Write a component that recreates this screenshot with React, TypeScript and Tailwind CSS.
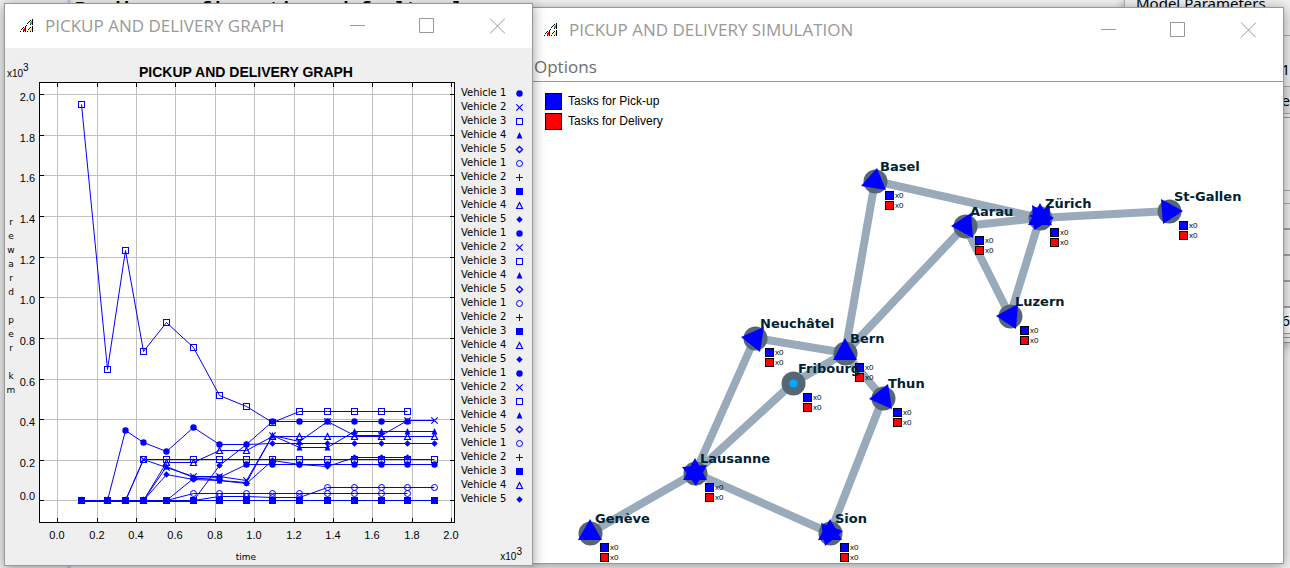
import type { ReactNode } from "react";

type Point = [number, number];
type Marker =
  | "disc"
  | "cross"
  | "square"
  | "triangleFilled"
  | "diamond"
  | "circle"
  | "plus"
  | "squareFilled"
  | "triangle"
  | "diamondFilled";

const BLUE = "#0000ff";

const MARKER_ORDER: Marker[] = [
  "disc",
  "cross",
  "square",
  "triangleFilled",
  "diamond",
  "circle",
  "plus",
  "squareFilled",
  "triangle",
  "diamondFilled",
];

function MarkerShape({ kind, x, y }: { kind: Marker; x: number; y: number }) {
  const line = { fill: "none", stroke: BLUE, strokeWidth: 1 };
  switch (kind) {
    case "disc":
      return <circle cx={x} cy={y} r={3.2} fill={BLUE} />;
    case "circle":
      return <circle cx={x} cy={y} r={3} {...line} />;
    case "cross":
      return <path d={`M${x - 3.2} ${y - 3.2}l6.4 6.4m0 -6.4l-6.4 6.4`} {...line} strokeWidth={1.2} />;
    case "plus":
      return <path d={`M${x - 3.5} ${y}h7m-3.5 -3.5v7`} {...line} />;
    case "square":
      return <rect x={x - 3} y={y - 3} width={6} height={6} {...line} />;
    case "squareFilled":
      return <rect x={x - 3.5} y={y - 3.5} width={7} height={7} fill={BLUE} />;
    case "triangle":
      return <path d={`M${x} ${y - 3}l3 6h-6z`} {...line} strokeWidth={1.2} />;
    case "triangleFilled":
      return <path d={`M${x} ${y - 3.5}l3 6.5h-6z`} fill={BLUE} />;
    case "diamond":
      return <path d={`M${x} ${y - 3}l3 3l-3 3l-3 -3z`} {...line} strokeWidth={1.4} />;
    case "diamondFilled":
      return <path d={`M${x} ${y - 3.2}l3.2 3.2l-3.2 3.2l-3.2 -3.2z`} fill={BLUE} />;
  }
}

/* ---------- chart data, in canvas units ---------- */

const TIMES = [81, 107, 125, 143, 166, 193, 219, 246, 272, 299, 327, 354, 381, 407, 434];
const Z = 500;

const SERIES: { marker: Marker; values: number[] }[] = [
  { marker: "square", values: [104, 369, 250, 351, 322, 347, 395, 406, 422, 411, 411, 411, 411, 411] },
  { marker: "disc", values: [Z, Z, 430, 442, 451, 427, 444, 444, 421, 421, 421, 421, 421, 421] },
  { marker: "cross", values: [Z, Z, Z, 459, 467, 476, 476, 480, 435, 441, 421, 435, 435, 420, 420] },
  { marker: "square", values: [Z, Z, Z, 459, 459, 459, 459, 459, 459, 459, 459, 459, 459, 459, 459] },
  { marker: "triangle", values: [Z, Z, Z, Z, 462, 462, 450, 450, 436, 436, 436, 436, 436, 436, 436] },
  { marker: "triangleFilled", values: [Z, Z, Z, Z, 466, 477, 480, 482, 435, 447, 447, 431, 431, 431, 431] },
  { marker: "diamondFilled", values: [Z, Z, Z, Z, 474, 479, 480, 483, 460, 464, 466, 457, 457, 457] },
  { marker: "diamondFilled", values: [Z, Z, Z, Z, Z, Z, 465, 444, 443, 443, 443, 443, 443, 443, 443] },
  { marker: "disc", values: [Z, Z, Z, Z, Z, 478, 477, 464, 464, 464, 464, 464, 464, 464, 464] },
  { marker: "circle", values: [Z, Z, Z, Z, Z, 493, 493, 493, 493, 493, 493, 493, 493, 493] },
  { marker: "circle", values: [Z, Z, Z, Z, Z, Z, 496, 496, 497, 497, 487, 487, 487, 487, 487] },
  { marker: "squareFilled", values: [Z, Z, Z, Z, Z, Z, Z, Z, Z, Z, Z, Z, Z, Z, Z] },
];

const X_TICKS = [57, 97, 136, 175, 215, 254, 294, 333, 372, 412, 451];
const Y_TICKS = [500, 460, 419, 379, 338, 297, 257, 216, 175, 135, 94];
const tickLabel = (i: number) => (i * 0.2).toFixed(1);

function RewardChart() {
  return (
    <svg
      viewBox="5 48 455 517"
      className="w-[455px] shrink-0"
      role="img"
      aria-label="Reward per km over time"
    >
      <g fontFamily="'Liberation Sans', Arial, sans-serif" fontSize={11} fill="#000">
        <text x={246} y={77} fontSize={14} fontWeight={700} textAnchor="middle">
          PICKUP AND DELIVERY GRAPH
        </text>
        <text x={7} y={77} fontSize={10}>x10</text>
        <text x={23} y={71} fontSize={10}>3</text>
        {Y_TICKS.map((y, i) => (
          <text key={y} x={35} y={i === 0 ? y : y + 7} textAnchor="end">
            {tickLabel(i)}
          </text>
        ))}
        {X_TICKS.map((x, i) => (
          <text key={x} x={x} y={539} textAnchor="middle">
            {tickLabel(i)}
          </text>
        ))}
      </g>
      <g fontFamily="'DejaVu Sans', sans-serif" fontSize={9} fill="#000" textAnchor="middle">
        <text x={246} y={560}>time</text>
        {"reward per km".split("").map((c, i) => (
          <text key={i} x={11} y={225 + i * 14}>
            {c}
          </text>
        ))}
      </g>

      <g shapeRendering="crispEdges" fill="none">
        <rect x={39.5} y={82.5} width={415} height={440} fill="#fff" stroke="none" />
        {X_TICKS.map((x) => (
          <path key={x} d={`M${x + 0.5} 83V522`} stroke="#c0c0c0" />
        ))}
        {Y_TICKS.map((y) => (
          <path key={y} d={`M40 ${y + 0.5}H454`} stroke="#c0c0c0" />
        ))}
        {X_TICKS.map((x) => (
          <path key={x} d={`M${x + 0.5} 83v4M${x + 0.5} 518v4`} stroke="#000" />
        ))}
        {Y_TICKS.map((y) => (
          <path key={y} d={`M40 ${y + 0.5}h4M450 ${y + 0.5}h4`} stroke="#000" />
        ))}
        <rect x={39.5} y={82.5} width={415} height={440} stroke="#000" />
      </g>

      <g transform="translate(0.5 0.5)">
        {SERIES.map((s, n) => (
          <g key={n}>
            <polyline
              points={s.values.map((v, i) => `${TIMES[i]},${v}`).join(" ")}
              fill="none"
              stroke={BLUE}
              strokeWidth={1}
            />
            {s.values.map((v, i) => (
              <MarkerShape key={i} kind={s.marker} x={TIMES[i]} y={v} />
            ))}
          </g>
        ))}
        <path d="M81 500.5H194" stroke={BLUE} strokeWidth={2} />
      </g>
    </svg>
  );
}

function VehicleLegend() {
  return (
    <div className="flex flex-1 flex-col justify-between pt-[38px] pr-2 pl-px">
      <ul className="font-['DejaVu_Sans',sans-serif] text-[10px] leading-[14px] text-black">
        {Array.from({ length: 30 }, (_, i) => (
          <li key={i} className="flex items-center justify-between">
            <span>Vehicle {(i % 5) + 1}</span>
            <svg viewBox="0 0 9 9" className="size-[9px]" aria-hidden="true">
              <MarkerShape kind={MARKER_ORDER[i % 10]} x={4.5} y={4.5} />
            </svg>
          </li>
        ))}
      </ul>
      <div className="mr-0.5 self-end font-['Liberation_Sans',Arial,sans-serif] text-[10px] leading-4 text-black">
        x10<sup className="text-[10px]">3</sup>
      </div>
    </div>
  );
}

/* ---------- map ---------- */

const CITIES: Record<string, Point> = {
  Basel: [875, 181],
  Aarau: [965, 226],
  "Zürich": [1040, 218],
  "St-Gallen": [1169, 211],
  Luzern: [1010, 316],
  "Neuchâtel": [755, 338],
  Bern: [845, 353],
  Fribourg: [793, 383],
  Thun: [883, 398],
  Lausanne: [695, 473],
  "Genève": [590, 533],
  Sion: [830, 533],
};

const ROADS: [string, string][] = [
  ["Basel", "Bern"],
  ["Basel", "Zürich"],
  ["Aarau", "Zürich"],
  ["Aarau", "Bern"],
  ["Aarau", "Luzern"],
  ["Zürich", "Luzern"],
  ["Zürich", "St-Gallen"],
  ["Neuchâtel", "Bern"],
  ["Neuchâtel", "Lausanne"],
  ["Bern", "Fribourg"],
  ["Fribourg", "Lausanne"],
  ["Bern", "Thun"],
  ["Thun", "Sion"],
  ["Lausanne", "Sion"],
  ["Lausanne", "Genève"],
];

const VEHICLES = [
  "877,168 861,186 886,190",
  "845,338 833,360 857,360",
  "590,519 578,540 602,540",
  "951,226 971,213 973,238",
  "996,316 1018,304 1016,329",
  "741,337 764,327 760,352",
  "869,399 888,384 892,409",
  "1161,199 1183,211 1163,224",
  "1040,203 1028,225 1052,225",
  "1032,205 1054,218 1034,230",
  "1050,206 1049,226 1029,216",
  "695,458 683,480 707,480",
  "682,467 707,465 696,486",
  "830,519 818,540 842,540",
  "843,531 825,546 821,523",
];

function RoadMap() {
  return (
    <svg viewBox="529 82 754 481" className="w-[754px]" role="img" aria-label="Road network">
      <g stroke="#99aabb" strokeWidth={8}>
        {ROADS.map(([a, b]) => (
          <line key={a + b} x1={CITIES[a][0]} y1={CITIES[a][1]} x2={CITIES[b][0]} y2={CITIES[b][1]} />
        ))}
      </g>
      {Object.entries(CITIES).map(([name, [x, y]]) => (
        <circle key={name} cx={x + 0.5} cy={y + 0.5} r={12} fill="#556677" />
      ))}
      <circle cx={793.5} cy={383.5} r={4} fill="#00aaff" />
      {VEHICLES.map((p) => (
        <polygon key={p} points={p} fill={BLUE} />
      ))}
      {Object.entries(CITIES).map(([name, [x, y]]) => (
        <g key={name} stroke="#000" shapeRendering="crispEdges">
          <rect x={x + 10.5} y={y + 10.5} width={8} height={8} fill={BLUE} />
          <rect x={x + 10.5} y={y + 20.5} width={8} height={8} fill="#ff0000" />
        </g>
      ))}
      <g fontFamily="'Liberation Sans', Arial, sans-serif" fontSize={8} fill="#000">
        {Object.entries(CITIES).map(([name, [x, y]]) => (
          <g key={name}>
            <text x={x + 20} y={y + 17}>x0</text>
            <text x={x + 20} y={y + 27}>x0</text>
          </g>
        ))}
      </g>
      <g fontFamily="'DejaVu Sans', sans-serif" fontSize={13} fontWeight={700} fill="#002233">
        {Object.entries(CITIES).map(([name, [x, y]]) => (
          <text key={name} x={x + 5} y={y - 10}>
            {name}
          </text>
        ))}
      </g>
    </svg>
  );
}

/* ---------- window frame ---------- */

function AppIcon() {
  return (
    <svg viewBox="0 0 14 14" className="size-[14px]" shapeRendering="crispEdges" aria-hidden="true">
      <path d="M11 2h1v3h-2V3h1z" fill="#00d040" />
      <path d="M4 9h1v3H3v-2h1z" fill="#ff0000" />
      <path d="M11 9h1v3h-2v-2h1z" fill="#ffee00" />
      <path
        d="M12 0h1v6h-1zM10 1h1v1h-1zM9 2h1v1H9zM8 3h1v1H8zM7 4h1v1H7zM6 6h1v1H6zM10 5h1v1h-1zM5 7h1v6H5zM3 8h1v1H3zM2 9h1v1H2zM1 10h1v1H1zM0 12h1v1H0zM3 12h1v1H3zM12 7h1v6h-1zM10 8h1v1h-1zM9 9h1v1H9zM8 10h1v1H8zM7 12h1v1H7zM10 12h1v1h-1z"
        fill="#000"
      />
    </svg>
  );
}

function WindowButton({ label, children }: { label: string; children: ReactNode }) {
  return (
    <button type="button" aria-label={label} className="flex h-full w-[70px] items-center justify-center">
      <svg viewBox="0 0 16 16" className="size-4" fill="none" stroke="#999">
        {children}
      </svg>
    </button>
  );
}

function TitleBar({ title }: { title: string }) {
  return (
    <header className="flex h-11 shrink-0 items-center bg-white pl-[15px]">
      <AppIcon />
      <h1 className="ml-[11px] flex-1 font-['Open_Sans','Noto_Sans',sans-serif] text-[17px] font-normal whitespace-nowrap text-[#999]">
        {title}
      </h1>
      <WindowButton label="Minimize">
        <path d="M1 7.5h15" />
      </WindowButton>
      <WindowButton label="Maximize">
        <path d="M0.5 0.5h14v14h-14z" />
      </WindowButton>
      <WindowButton label="Close">
        <path d="M1 0.5l15 15m0 -15l-15 15" />
      </WindowButton>
    </header>
  );
}

function TaskKey({ swatch, children }: { swatch: string; children: ReactNode }) {
  return (
    <li className="flex h-5 items-start gap-[6px]">
      <span className={`size-[17px] border border-black ${swatch}`} />
      <span className="leading-4">{children}</span>
    </li>
  );
}

function ParametersPanel() {
  return (
    <section className="absolute top-0 right-0 left-[1124px] h-[343px] overflow-hidden border-b border-[#999] bg-[#f0f0f0] font-['Noto_Sans',sans-serif] text-[15px] text-black shadow-[0_2px_10px_rgba(0,0,0,0.35)]">
      <div className="flex h-9 border-b border-l border-[#b0b0b0]">
        <h2 className="-mt-2 pl-[11px] text-[15px] leading-[22px]">Model Parameters</h2>
      </div>
      <div className="flex h-[51px] items-center justify-end border-b border-[#aaa] pt-4">1</div>
      <div className="flex h-[27px] items-center justify-end border-b border-[#aaa] bg-[#e4e4e4]">pe</div>
      <div className="h-1 border-b border-[#999]" />
      <div className="h-[73px] border-b border-[#aaa]" />
      <div className="h-[13px] border-b border-[#aaa]" />
      <div className="h-[26px] border-b-2 border-[#a0a0aa]" />
      <div className="h-[26px] border-b-2 border-[#a0a0aa]" />
      <div className="h-[26px] border-b-2 border-[#a0a0aa]" />
      <div className="h-[26px] border-b-2 border-[#a0a0aa]" />
      <div className="flex h-[26px] items-center justify-end border-b border-[#999] bg-white">06</div>
      <div className="h-1 border-b border-[#999]" />
    </section>
  );
}

export default function App() {
  return (
    <main className="relative h-screen overflow-hidden bg-[#f0f0f0]">
      <section className="absolute inset-y-0 right-0 left-[67px] overflow-hidden border-l-4 border-[#d0d0e0] bg-[#f4f4f4]">
        <p className="-mt-px pl-1 font-['Liberation_Mono',monospace] text-[19px] leading-5 font-bold whitespace-nowrap text-black">
          Reading configuration: default.xml
        </p>
      </section>
      <ParametersPanel />

      <section className="absolute top-[7px] left-[528px] flex w-[756px] flex-col border border-[#999] bg-white shadow-[0_2px_12px_rgba(0,0,0,0.4)]">
        <TitleBar title="PICKUP AND DELIVERY SIMULATION" />
        <nav className="flex h-[30px] shrink-0 items-center border-b border-[#999] pl-[5px]">
          <button type="button" className="font-['Open_Sans','Noto_Sans',sans-serif] text-[17px] leading-6 text-[#6d6d6d]">
            Options
          </button>
        </nav>
        <div className="relative">
          <RoadMap />
          <ul className="absolute top-[11px] left-4 font-['Liberation_Sans',Arial,sans-serif] text-[12px] text-black">
            <TaskKey swatch="bg-[#0000ff]">Tasks for Pick-up</TaskKey>
            <TaskKey swatch="bg-[#ff0000]">Tasks for Delivery</TaskKey>
          </ul>
        </div>
      </section>

      <section className="absolute top-[3px] left-1 flex w-[529px] flex-col border border-[#999] bg-[#efefef] shadow-[0_2px_12px_rgba(0,0,0,0.4)]">
        <TitleBar title="PICKUP AND DELIVERY GRAPH" />
        <div className="flex">
          <RewardChart />
          <VehicleLegend />
        </div>
      </section>
    </main>
  );
}
